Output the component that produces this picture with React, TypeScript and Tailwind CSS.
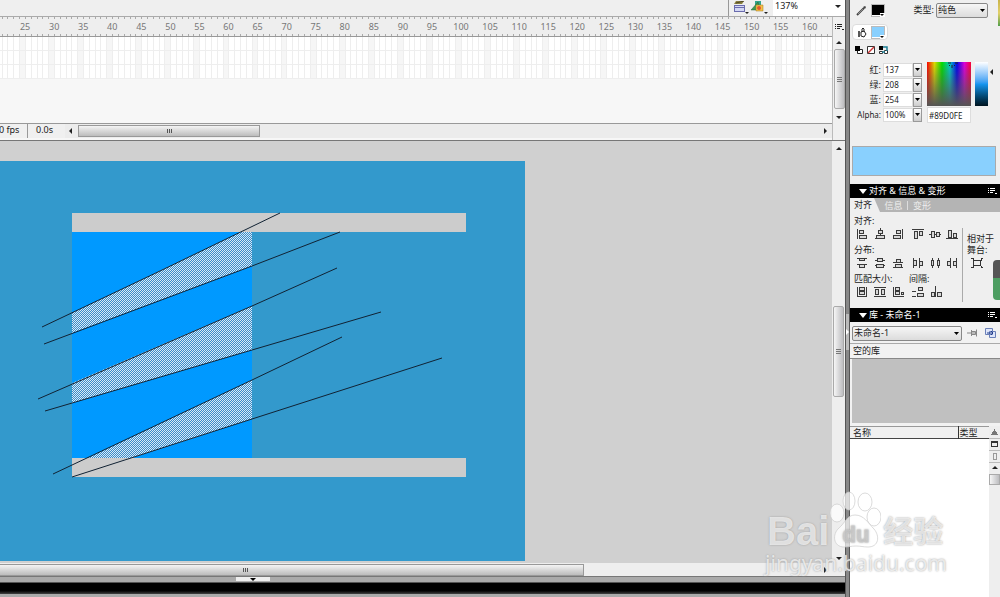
import { useState } from "react"
import type { ReactNode } from "react"

const frameGroups = Array.from({ length: 30 }, (_, i) => 20 + i * 5)

// 12x12 outlines for the align panel
const alignRow = [
  "M1.5 1v10M3.5 2.5h4v3h-4zM3.5 7.5h7v3h-7z",
  "M6.5 0v2M6.5 5v2M4.5 2.5h4v3h-4zM2.5 7.5h8v3h-8zM1 10.5h10",
  "M10.5 1v10M4.5 2.5h4v3h-4zM1.5 7.5h7v3h-7z",
  "M0 1.5h12M2.5 3.5h3v7h-3zM7.5 3.5h3v4h-3z",
  "M0 6.5h2M5 6.5h2M10 6.5h2M2.5 3.5h3v6h-3zM7.5 4.5h3v4h-3z",
  "M0 10.5h12M2.5 2.5h3v7h-3zM7.5 5.5h3v4h-3z",
]
const distributeRow = [
  "M1 1.5h10M1 7.5h10M3.5 1.5h5v2h-5zM3.5 7.5h5v3h-5z",
  "M1 3.5h2M9 3.5h2M1 8.5h2M9 8.5h2M3.5 1.5h5v3h-5zM2.5 7.5h7v3h-7z",
  "M1 5.5h10M1 10.5h10M4.5 2.5h4v3h-4zM3.5 7.5h6v3h-6z",
  "M1.5 1v10M7.5 1v10M1.5 3.5h3v5h-3zM7.5 4.5h3v4h-3z",
  "M3.5 1v2M3.5 9v2M9.5 1v2M9.5 9v2M2.5 3.5h2v5h-2zM8.5 3.5h2v5h-2z",
  "M4.5 1v10M10.5 1v10M1.5 4.5h3v4h-3zM7.5 4.5h3v4h-3z",
]
const matchRow = [
  "M1.5 1v10M10.5 1v10M1 10.5h10M3.5 1.5h5v3h-5zM3.5 5.5h5v3h-5z",
  "M0 1.5h12M0 10.5h12M1.5 3.5h3v5h-3zM7.5 3.5h3v5h-3z",
  "M1.5 1v10M1 10.5h11M3.5 1.5h4v3h-4zM3.5 5.5h4v3h-4zM9.5 6.5h2v2h-2z",
]
const spaceRow = [
  "M0 5.5h4M0 10.5h4M6.5 1.5h4v3h-4zM5.5 7.5h6v3h-6z",
  "M5.5 0v11M1.5 6.5h3v4h-3zM7.5 6.5h4v4h-4z",
]

function Glyph({ d, size = 12 }: { d: string; size?: number }) {
  return (
    <svg width={size} height={size} viewBox={`0 0 ${size} ${size}`} fill="#d8d8d8" stroke="#3a3a3a" shapeRendering="crispEdges">
      <path d={d} />
    </svg>
  )
}

function Arrow({ dir, className = "" }: { dir: "up" | "down" | "left" | "right"; className?: string }) {
  const paths = {
    up: "M1 5L4 2L7 5z",
    down: "M1 3H7L4 6z",
    left: "M5 1L2 4L5 7z",
    right: "M3 1L6 4L3 7z",
  }
  return (
    <svg width="8" height="8" viewBox="0 0 8 8" className={`shrink-0 ${className}`} fill="currentColor">
      <path d={paths[dir]} />
    </svg>
  )
}

function IconButton({ label, children }: { label: string; children: ReactNode }) {
  return (
    <button type="button" aria-label={label} className="flex shrink-0 items-center justify-center">
      {children}
    </button>
  )
}

function MenuIcon({ className = "" }: { className?: string }) {
  return (
    <svg width="9" height="8" viewBox="0 0 9 8" className={className} stroke="currentColor" fill="currentColor" shapeRendering="crispEdges">
      <path d="M0 1.5h1M2 1.5h5M0 3.5h1M2 3.5h5M0 5.5h1M2 5.5h3" />
      <path d="M6 6h3L7.5 7.5z" stroke="none" />
    </svg>
  )
}

function HThumb({ className }: { className: string }) {
  return (
    <div className={`flex h-3 items-center justify-center gap-px border border-[#999] bg-linear-to-b from-[#f4f4f4] to-[#bcbcbc] ${className}`}>
      {[0, 1, 2].map((n) => (
        <span key={n} className="h-1 w-px bg-[#555]" />
      ))}
    </div>
  )
}

function VThumb({ className }: { className: string }) {
  return (
    <div className={`flex w-[11px] flex-col items-center justify-center gap-px rounded-xs border border-[#aaa] bg-linear-to-r from-[#f6f6f6] to-[#bdbdc0] ${className}`}>
      {[0, 1, 2].map((n) => (
        <span key={n} className="h-px w-[5px] bg-[#777]" />
      ))}
    </div>
  )
}

function Toolbar() {
  return (
    <div className="flex h-[17px] shrink-0 border-b border-[#aaa] bg-[#efefef]">
      <div className="ml-auto flex w-[117px] border-l border-[#999] pl-1">
        <IconButton label="编辑场景">
          <svg width="16" height="14" viewBox="0 0 16 14">
            <path d="M3 0h8l-2 3H1z" fill="#8a7f40" />
            <path d="M3 2l8-2" stroke="#4f4a28" />
            <rect x="1.500" y="4.500" width="10" height="6" fill="#d4d8f4" stroke="#6a6cae" />
            <path d="M2 6.500h9" stroke="#6a6cae" />
            <path d="M12 11h4l-2 2z" fill="#222" />
          </svg>
        </IconButton>
        <IconButton label="编辑元件">
          <svg width="20" height="14" viewBox="0 0 20 14">
            <path d="M6 0h6v5H6z" fill="#33a58c" />
            <path d="M2 9l7-8 2 8z" fill="#3c9a56" stroke="#25613a" strokeWidth="0.500" />
            <path d="M7 4h7v6H7z" fill="#f3c34a" stroke="#a5751c" strokeWidth="0.500" />
            <circle cx="10" cy="7" r="2" fill="#e2572f" />
            <path d="M15 11h4l-2 2z" fill="#222" />
          </svg>
        </IconButton>
        <div className="relative ml-1 flex flex-1 bg-white">
          <select aria-label="缩放" className="h-3 w-full appearance-none pl-0.5 text-[9px] leading-3 text-[#222]">
            <option>137%</option>
            <option>100%</option>
          </select>
          <Arrow dir="down" className="pointer-events-none absolute top-0.5 right-[3px]" />
        </div>
      </div>
    </div>
  )
}

function Ticks() {
  return (
    <div className="flex h-0.5">
      {[0, 1, 2, 3, 4].map((f) => (
        <span key={f} className="flex-1 border-r border-[#aaa]" />
      ))}
    </div>
  )
}

function Timeline() {
  return (
    <div className="flex h-[124px] shrink-0 border-b border-[#777] bg-[#f0f0f0]">
      <div className="flex min-w-0 flex-1 flex-col overflow-hidden bg-[#f7f7f7]">
        <div className="-mr-[31px] -ml-[9px] flex h-5 shrink-0 border-b border-[#999] bg-[#eee]">
          {frameGroups.map((n) => (
            <div key={n} className="flex min-w-0 flex-1 flex-col justify-between">
              <Ticks />
              <span className="flex w-2.5 justify-center text-[9px] leading-[10px] text-[#777]">{n > 20 && n < 165 ? n : ""}</span>
              <Ticks />
            </div>
          ))}
        </div>
        {[0, 1, 2].map((row) => (
          <div key={row} className="-mr-[31px] -ml-[9px] flex h-[14px] shrink-0 border-b border-[#eee]">
            {frameGroups.map((n) => (
              <div key={n} className="flex min-w-0 flex-1">
                {[0, 1, 2, 3, 4].map((f) => (
                  <span key={f} className={`flex-1 border-r border-[#eee] ${f === 0 ? "bg-[#f6f6f6]" : "bg-white"}`} />
                ))}
              </div>
            ))}
          </div>
        ))}
        <div className="mt-auto mb-0.5 flex h-[15px] shrink-0 items-center border-t border-[#999] bg-[#f0f0f0] text-[9px] text-[#222]">
          <span className="-ml-px h-full w-6">0 fps</span>
          <span className="ml-1 h-full w-[38px] border-l border-[#999] pl-2">0.0s</span>
          <div className="flex h-full flex-1 items-center bg-[#ececec]">
            <Arrow dir="left" className="mr-[3px] ml-0.5" />
            <HThumb className="w-[182px]" />
            <Arrow dir="right" className="mr-[3px] ml-auto" />
          </div>
        </div>
      </div>
      <div className="flex w-[13px] shrink-0 flex-col items-center border-l border-[#bbb] text-[#222]">
        <MenuIcon className="mt-[6px]" />
        <Arrow dir="up" className="mt-2" />
        <VThumb className="mt-0.5 h-[60px]" />
        <Arrow dir="down" className="mt-1" />
      </div>
    </div>
  )
}

function Artwork() {
  return (
    <svg width="525" height="400" viewBox="0 161 525 400" className="mt-5 shrink-0">
      <defs>
        <pattern id="selected" width="2" height="2" patternUnits="userSpaceOnUse" shapeRendering="crispEdges">
          <rect width="2" height="2" fill="#3a8bc8" />
          <rect width="1" height="1" fill="#d9eaf6" />
          <rect x="1" y="1" width="1" height="1" fill="#d9eaf6" />
        </pattern>
      </defs>
      <rect y="161" width="525" height="400" fill="#3399cc" />
      <rect x="72" y="213" width="394" height="19" fill="#ccc" />
      <rect x="72" y="232" width="180" height="226" fill="#0099ff" />
      <rect x="72" y="458" width="394" height="19" fill="#ccc" />
      <g fill="url(#selected)">
        <path d="M72 313L241 232H252V266L72 333z" />
        <path d="M72 383L252 306V350L72 403z" />
        <path d="M88 458L252 380V419L132 458z" />
      </g>
      <g fill="none" stroke="#123" strokeWidth="1">
        <path d="M42 327L160 271L280 213" />
        <path d="M44 344L252 266L340 232" />
        <path d="M38 399L252 306L337 268" />
        <path d="M45 411L252 350L381 312" />
        <path d="M53 474L252 380L342 337" />
        <path d="M72 477L252 419L442 358" />
      </g>
    </svg>
  )
}

function Stage() {
  return (
    <div className="flex min-h-0 flex-1 flex-col border-b border-[#777] bg-[#d0d0d0]">
      <div className="flex min-h-0 flex-1">
        <div className="flex min-w-0 flex-1 items-start overflow-hidden">
          <Artwork />
        </div>
        <div className="flex w-[13px] shrink-0 flex-col items-center bg-[#eee] text-[#222]">
          <Arrow dir="up" className="mt-1" />
          <VThumb className="mt-[153px] h-[91px]" />
          <Arrow dir="down" className="mt-auto mb-px" />
        </div>
      </div>
      <div className="flex h-[13px] shrink-0 items-center bg-[#eee] text-[#222]">
        <HThumb className="-ml-[94px] w-[678px]" />
        <Arrow dir="right" className="mr-4 ml-auto" />
      </div>
    </div>
  )
}

function Channel({ id, label, value }: { id: string; label: string; value: string }) {
  const [text, setText] = useState(value)
  return (
    <div className="flex h-[15px] items-center">
      <label htmlFor={id} className={`w-[31px] text-right ${id === "alpha" ? "text-[8px]" : ""}`}>
        {label}
      </label>
      <input
        id={id}
        value={text}
        onChange={(e) => setText(e.target.value)}
        className="ml-0.5 h-[14px] w-[30px] border border-[#ddd] bg-white pl-px text-[8px]"
      />
      <button type="button" aria-label={`${label} 滑块`} className="flex h-[14px] w-[9px] items-center justify-center border border-[#999] bg-linear-to-b from-white to-[#ccc]">
        <svg width="5" height="3" viewBox="0 0 5 3">
          <path d="M0 0h5L2.500 3z" />
        </svg>
      </button>
    </div>
  )
}

function SmallSelect({ id, value, className }: { id: string; value: string; className: string }) {
  return (
    <div className={`relative ${className}`}>
      <select id={id} aria-label={value} className="block h-[15px] w-full appearance-none rounded-xs border border-[#888] bg-linear-to-b from-[#f6f6f6] to-[#dcdcdc] pl-px text-[9px] leading-3">
        <option>{value}</option>
      </select>
      <svg width="5" height="3" viewBox="0 0 5 3" className="pointer-events-none absolute top-1.5 right-[3px]">
        <path d="M0 0h5L2.500 3z" />
      </svg>
    </div>
  )
}

function Swatch({ color }: { color: string }) {
  return (
    <svg width="14" height="13" viewBox="0 0 14 13">
      <rect x="0.500" y="0.500" width="13" height="12" fill="#fff" stroke="#bbb" />
      <rect x="1" y="1" width="12" height="10" fill={color} />
      <path d="M9 9h5v4H9z" fill="#fff" />
      <path d="M9 10h4l-2 2z" fill="#111" />
    </svg>
  )
}

function ColorPanel() {
  const [hex, setHex] = useState("#89D0FE")
  return (
    <div className="flex h-[184px] shrink-0 flex-col bg-[#efefef]">
      <div className="flex h-5 items-center pl-1.5">
        <svg width="11" height="11" viewBox="0 0 11 11" className="mr-1">
          <path d="M1 10L8 3" stroke="#444" strokeWidth="2" />
          <path d="M2 9L7 4" stroke="#ddd" strokeWidth="0.500" />
          <path d="M7 2l2-1 1 1-1 2z" fill="#444" />
        </svg>
        <IconButton label="笔触颜色">
          <Swatch color="#000" />
        </IconButton>
        <label htmlFor="fill-type" className="ml-auto">
          类型:
        </label>
        <SmallSelect id="fill-type" value="纯色" className="mr-3 ml-0.5 w-[52px]" />
      </div>
      <div className="mt-1 ml-0.5 flex h-4 w-[36px] items-center rounded-sm border border-[#ddd] bg-white pl-1">
        <svg width="10" height="11" viewBox="0 0 10 11" className="mr-1 shrink-0" fill="none" stroke="#222">
          <path d="M4 5l3-1 2 3-2 3-3-1zM5 5V2l1-1 1 1v3" />
          <path d="M2 4v6" strokeWidth="1.500" />
        </svg>
        <IconButton label="填充颜色">
          <Swatch color="#89d0fe" />
        </IconButton>
      </div>
      <div className="mt-1 ml-1 flex items-center gap-0.5">
        <IconButton label="黑白">
          <svg width="10" height="12" viewBox="0 0 10 12">
            <path d="M3.500 5.500h5v4h-5z" fill="#fff" stroke="#222" />
            <path d="M1 2h5v5H1z" />
          </svg>
        </IconButton>
        <IconButton label="没有颜色">
          <svg width="10" height="12" viewBox="0 0 10 12">
            <path d="M1.500 2.500h7v7h-7z" fill="#fff" stroke="#333" />
            <path d="M2 9l6-6" stroke="#c33" strokeWidth="1.500" />
          </svg>
        </IconButton>
        <IconButton label="交换颜色">
          <svg width="11" height="12" viewBox="0 0 11 12">
            <path d="M1 2h4v4H1z" />
            <path d="M1.500 7.500h3v2h-3zM6.500 6.500h3v3h-3z" fill="#fff" stroke="#333" />
            <path d="M5 3h4v4M7 8H4" stroke="#1d7f95" strokeWidth="1.500" fill="none" />
          </svg>
        </IconButton>
      </div>
      <div className="mt-1.5 flex">
        <div className="flex flex-col">
          <Channel id="red" label="红:" value="137" />
          <Channel id="green" label="绿:" value="208" />
          <Channel id="blue" label="蓝:" value="254" />
          <Channel id="alpha" label="Alpha:" value="100%" />
        </div>
        <div className="ml-[5px] w-11">
          <svg width="44" height="44" viewBox="0 0 44 44" className="block">
            <defs>
              <linearGradient id="hue">
                <stop offset="0" stopColor="#f00" />
                <stop offset="0.170" stopColor="#dd0" />
                <stop offset="0.340" stopColor="#0d0" />
                <stop offset="0.520" stopColor="#0cc" />
                <stop offset="0.680" stopColor="#00e" />
                <stop offset="0.850" stopColor="#d0d" />
                <stop offset="1" stopColor="#f03" />
              </linearGradient>
              <linearGradient id="shade" x2="0" y2="1">
                <stop offset="0" stopColor="#555" stopOpacity="0" />
                <stop offset="1" stopColor="#555" />
              </linearGradient>
            </defs>
            <rect width="44" height="44" fill="url(#hue)" />
            <rect width="44" height="44" fill="url(#shade)" />
            <path d="M21 1h3M28 1h3M25 3v3M22 4l1-1M28 4l-1-1" stroke="#222" />
          </svg>
          <input
            aria-label="十六进制颜色"
            value={hex}
            onChange={(e) => setHex(e.target.value)}
            className="mt-px block h-4 w-full border border-[#ddd] bg-white pl-px text-[8px]"
          />
        </div>
        <div className="ml-1 h-11 w-[13px] bg-linear-to-b from-white via-[#1696f0] to-[#001420]" />
        <Arrow dir="left" className="mt-1.5" />
      </div>
      <div className="mx-0.5 mt-auto mr-1 mb-2 h-[30px] border border-[#aaa] bg-[#89d0fe]" />
    </div>
  )
}

function PanelHeader({ title }: { title: string }) {
  return (
    <h2 className="flex h-[14px] shrink-0 items-center bg-black pr-[3px] pl-[9px] text-[9px] text-white">
      <svg width="8" height="8" viewBox="0 0 8 8" className="mr-0.5" fill="currentColor">
        <path d="M0 2H8L4 7z" />
      </svg>
      {title}
      <MenuIcon className="ml-auto" />
    </h2>
  )
}

function IconRow({ icons, label, className = "" }: { icons: string[]; label: string; className?: string }) {
  return (
    <div className={`flex items-center ${className}`}>
      {icons.map((d, i) => (
        <IconButton key={d} label={`${label} ${i + 1}`}>
          <Glyph d={d} />
        </IconButton>
      ))}
    </div>
  )
}

function AlignPanel() {
  const tabs = ["对齐", "信息", "变形"]
  const [tab, setTab] = useState("对齐")
  return (
    <div className="flex h-[110px] shrink-0 flex-col bg-[#efefef]">
      <div className="flex h-[14px] shrink-0 items-center bg-[#b4b4b4]" role="tablist">
        {tabs.map((t) => (
          <button
            key={t}
            type="button"
            role="tab"
            aria-selected={t === tab}
            onClick={() => setTab(t)}
            className={
              t === tab
                ? "h-full w-[30px] bg-[#efefef] pl-1 text-left [clip-path:polygon(0_0,80%_0,100%_100%,0_100%)]"
                : "w-[28px] border-r border-[#ddd] leading-[9px] text-[#eee] last:border-0"
            }
          >
            {t}
          </button>
        ))}
      </div>
      <div className="flex flex-1">
        <div className="flex w-[112px] shrink-0 flex-col pl-1 leading-[13px]">
          <span className="pt-0.5">对齐:</span>
          <div className="mb-0.5 flex h-[14px] items-center gap-2 pl-0.5">
            <IconRow icons={alignRow.slice(0, 3)} label="左右对齐" className="gap-1.5" />
            <IconRow icons={alignRow.slice(3)} label="上下对齐" className="gap-[5px]" />
          </div>
          <span>分布:</span>
          <div className="mb-0.5 flex h-[14px] items-center gap-2 pl-0.5">
            <IconRow icons={distributeRow.slice(0, 3)} label="垂直分布" className="gap-1.5" />
            <IconRow icons={distributeRow.slice(3)} label="水平分布" className="gap-[5px]" />
          </div>
          <div className="flex">
            <span className="w-[55px]">匹配大小:</span>
            <span>间隔:</span>
          </div>
          <div className="flex h-[14px] items-center gap-2 pl-0.5">
            <IconRow icons={matchRow} label="匹配大小" className="gap-1.5" />
            <IconRow icons={spaceRow} label="间隔" className="gap-1.5" />
          </div>
        </div>
        <div className="mt-4 mb-1.5 flex min-w-0 flex-1 flex-col border-l border-[#aaa] pt-[5px] pl-1 leading-[11px] whitespace-nowrap">
          <span>相对于</span>
          <span>舞台:</span>
          <button type="button" aria-label="相对于舞台" className="mt-0.5 ml-1 w-3">
            <svg width="12" height="12" viewBox="0 0 12 12" fill="none" stroke="#333" shapeRendering="crispEdges">
              <path d="M2.500 3.500h7v5h-7zM0 1.500h2v2M12 1.500h-2v2M0 10.500h2v-2M12 10.500h-2v-2" />
            </svg>
          </button>
        </div>
        <div className="mt-12 h-10 w-[7px] shrink-0 rounded-l bg-linear-to-b from-[#555] from-45% to-[#4d9e62] to-45%" />
      </div>
    </div>
  )
}

function LibraryPanel() {
  return (
    <div className="flex min-h-0 flex-1 flex-col bg-[#f2f2f2]">
      <div className="mt-px flex h-5 shrink-0 items-center pl-0.5">
        <SmallSelect id="library-doc" value="未命名-1" className="w-[110px]" />
        <IconButton label="固定当前库">
          <svg width="20" height="12" viewBox="0 0 20 12" fill="#bbb" stroke="#888">
            <path d="M5 6h4M9.500 3v6M9.500 4.500h4v3h-4zM14.500 2.500v7" />
          </svg>
        </IconButton>
        <IconButton label="新建库面板">
          <svg width="17" height="12" viewBox="0 0 17 12" fill="#dfe6fa" stroke="#6a80b8">
            <path d="M3.500 1.500h7v6h-7zM7.500 4.500h6v6h-6z" />
            <path d="M5 6h6M9 4l2 2-2 2" stroke="#203c8c" fill="none" />
          </svg>
        </IconButton>
      </div>
      <div className="h-4 shrink-0 border-y border-t-[#aaa] border-b-[#888] pl-[3px] leading-[13px]">空的库</div>
      <div className="ml-0.5 h-16 shrink-0 bg-[#c0c0c0]" />
      <div className="mt-[3px] flex min-h-0 flex-1">
        <div className="min-w-0 flex-1 bg-white">
          <table className="w-full border-collapse text-left">
            <thead>
              <tr className="h-3 border-y border-t-[#999] border-b-[#444] bg-[#f0f0f0]">
                <th className="p-0 pl-[3px] leading-[10px] font-normal">名称</th>
                <th className="w-[31px] border-l border-[#333] p-0 pl-px leading-[10px] font-normal">类型</th>
              </tr>
            </thead>
          </table>
        </div>
        <div className="flex w-[11px] flex-col items-center bg-[#eee]">
          <svg width="11" height="38" viewBox="0 0 11 38" fill="none" stroke="#333" shapeRendering="crispEdges">
            <path d="M3 8L5.500 4L8 8z" fill="#777" stroke="#777" />
            <path d="M0 12.500h11M0 24.500h11M0 36.500h11" stroke="#bbb" />
            <path d="M2.500 15.500h6v5h-6zM2 16.500h7" />
            <path d="M4.500 27.500h3v6h-3z" stroke="#999" />
          </svg>
          <Arrow dir="up" />
          <div className="mt-0.5 h-[11px] w-[11px] border border-[#aaa] bg-linear-to-r from-[#f6f6f6] to-[#bdbdc0]" />
        </div>
      </div>
    </div>
  )
}

function Watermark() {
  return (
    <div className="pointer-events-none absolute right-[53px] bottom-[22px] text-white/70 [text-shadow:0_0_2px_#999]">
      <div className="mb-0.5 flex h-[58px] items-end pl-0.5">
        <span className="font-['Liberation_Sans'] text-[40px] leading-9 font-bold">Bai</span>
        <svg width="52" height="58" viewBox="0 0 52 58" fill="#fff" fillOpacity="0.700" stroke="#ccc" strokeOpacity="0.700">
          <ellipse cx="8" cy="22" rx="7" ry="9" />
          <ellipse cx="20" cy="10" rx="6" ry="9" />
          <ellipse cx="36" cy="11" rx="7" ry="9" />
          <ellipse cx="45" cy="26" rx="7" ry="9" />
          <path d="M26 24c-8 0-10 8-16 13C3 43 4 56 15 56c5 0 7-1 12-1s7 1 12 1c11 0 12-11 6-18-6-6-10-14-19-14z" />
          <text x="27" y="51" textAnchor="middle" fontSize="22" fontFamily="Liberation Sans, sans-serif" fontWeight="bold" fill="#ddd" fillOpacity="0.600" stroke="#ccc">
            du
          </text>
        </svg>
        <span className="ml-0.5 text-[30px] leading-9 font-bold">经验</span>
      </div>
      <div className="font-['Noto_Sans'] text-[21px] leading-6">jingyan.baidu.com</div>
    </div>
  )
}

export default function App() {
  return (
    <div className="relative flex h-screen overflow-hidden bg-[#858585] font-['Noto_Sans','Noto_Sans_CJK_SC',sans-serif] text-[9px] leading-3 text-[#222]">
      <main className="flex min-w-0 flex-1 flex-col">
        <Toolbar />
        <Timeline />
        <Stage />
        <div className="flex h-[5px] shrink-0 bg-[#aaa]">
          <button type="button" aria-label="折叠" className="ml-[236px] flex h-1 w-[34px] items-center justify-center bg-[#eee]">
            <svg width="6" height="3" viewBox="0 0 6 3">
              <path d="M0 0h6L3 3z" />
            </svg>
          </button>
        </div>
        <div className="h-3 shrink-0 border-t border-[#555] bg-linear-to-b from-black from-60% to-[#444]" />
        <div className="h-[3px] shrink-0 bg-[#aaa]" />
      </main>
      <div className="flex w-[5px] shrink-0 flex-col border-x border-[#555] bg-[#888]">
        <button type="button" aria-label="折叠面板" className="mt-[314px] flex h-9 items-center bg-[#bbb]">
          <svg width="3" height="6" viewBox="0 0 3 6" fill="#fff">
            <path d="M0 0l3 3-3 3z" />
          </svg>
        </button>
      </div>
      <aside className="flex w-[150px] shrink-0 flex-col">
        <ColorPanel />
        <PanelHeader title="对齐 & 信息 & 变形" />
        <AlignPanel />
        <PanelHeader title="库 - 未命名-1" />
        <LibraryPanel />
      </aside>
      <div className="absolute top-0 right-0 h-[26px] w-0.5 bg-linear-to-b from-[#c9b44a] via-[#e2d06a] to-[#4f9e4a]" />
      <Watermark />
    </div>
  )
}
